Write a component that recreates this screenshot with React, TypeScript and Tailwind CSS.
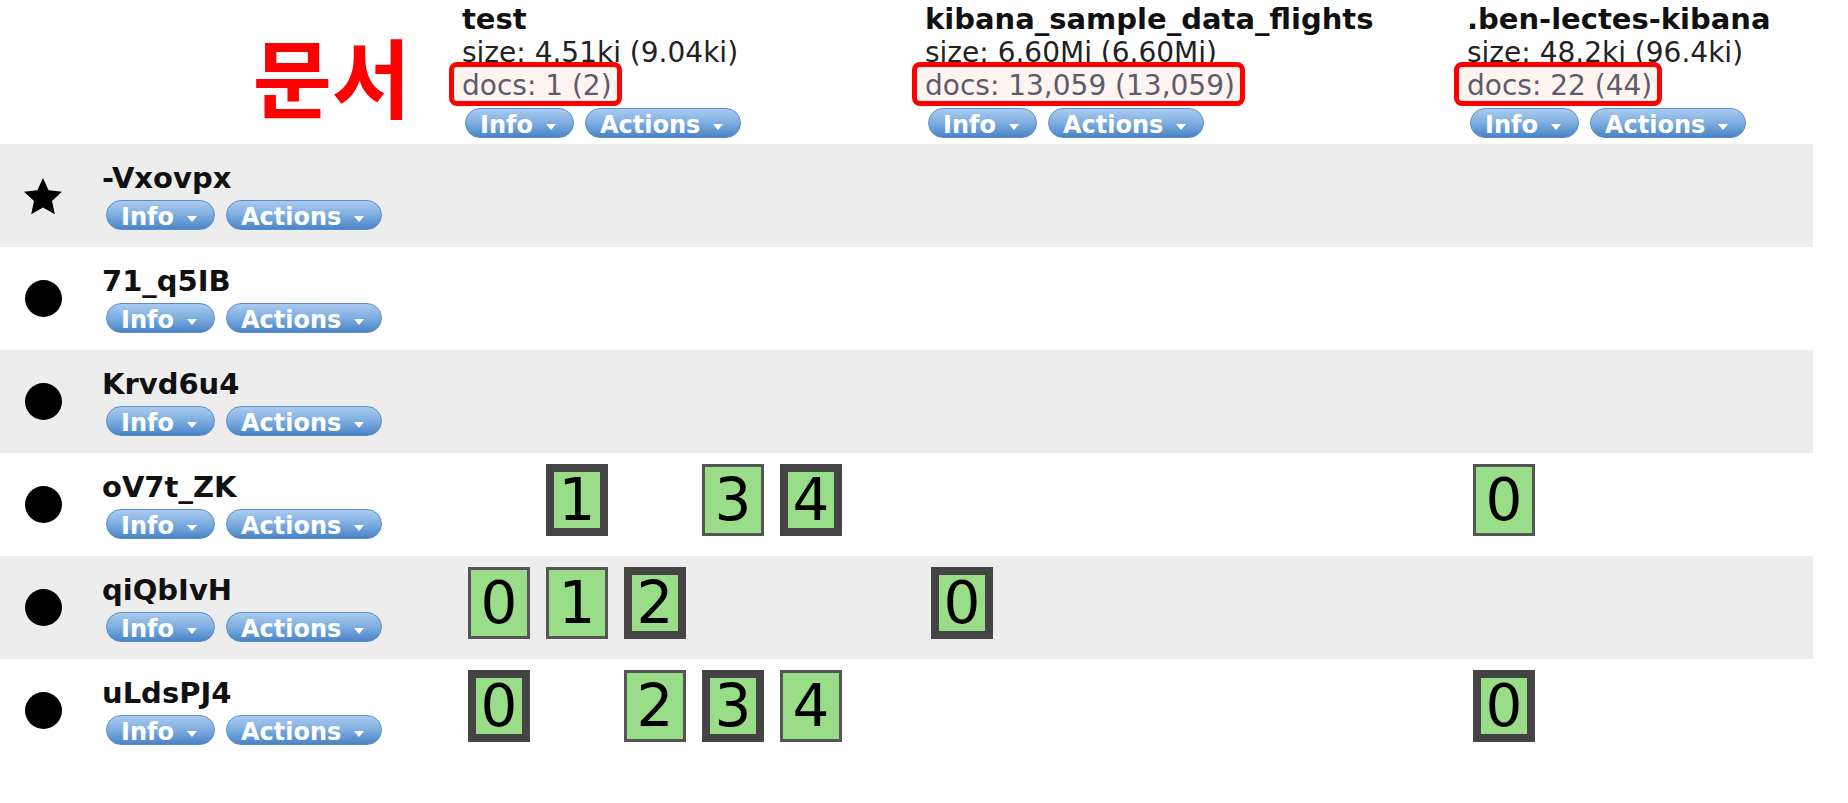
import React from 'react';

type Shard = { n: number; primary: boolean } | null;

const indices = [
  { name: 'test', size: 'size: 4.51ki (9.04ki)', docs: 'docs: 1 (2)' },
  { name: 'kibana_sample_data_flights', size: 'size: 6.60Mi (6.60Mi)', docs: 'docs: 13,059 (13,059)' },
  { name: '.ben-lectes-kibana', size: 'size: 48.2ki (96.4ki)', docs: 'docs: 22 (44)' },
];

const nodes: { name: string; master?: boolean; shards: Shard[][]; stripe: boolean }[] = [
  { name: '-Vxovpx', master: true, shards: [[], [], []], stripe: true },
  { name: '71_q5IB', shards: [[], [], []], stripe: false },
  { name: 'Krvd6u4', shards: [[], [], []], stripe: true },
  {
    name: 'oV7t_ZK',
    stripe: false,
    shards: [
      [null, { n: 1, primary: true }, null, { n: 3, primary: false }, { n: 4, primary: true }],
      [],
      [{ n: 0, primary: false }],
    ],
  },
  {
    name: 'qiQbIvH',
    stripe: true,
    shards: [
      [{ n: 0, primary: false }, { n: 1, primary: false }, { n: 2, primary: true }],
      [{ n: 0, primary: true }],
      [],
    ],
  },
  {
    name: 'uLdsPJ4',
    stripe: false,
    shards: [
      [{ n: 0, primary: true }, null, { n: 2, primary: false }, { n: 3, primary: true }, { n: 4, primary: false }],
      [],
      [{ n: 0, primary: true }],
    ],
  },
];

const font = { fontFamily: '"DejaVu Sans", Verdana, sans-serif' };

function Btn({ label }: { label: string }) {
  return (
    <span className="inline-flex h-[30px] items-start overflow-hidden rounded-full border border-[#5b8dc6] bg-gradient-to-b from-[#aacbef] via-[#7dade0] to-[#4a84c6] pl-[14px] pr-[17px] pt-[4px] text-[24px] font-bold leading-[24px] text-white">
      {label}
      <span className="ml-[13px] mt-[11px] h-0 w-0 border-l-[5px] border-r-[5px] border-t-[6px] border-l-transparent border-r-transparent border-t-white" />
    </span>
  );
}

function Buttons() {
  return (
    <div className="flex gap-[11px]">
      <Btn label="Info" />
      <Btn label="Actions" />
    </div>
  );
}

function ShardBox({ s }: { s: Shard }) {
  if (!s) return <div className="mr-[16px] w-[62px] shrink-0" />;
  return (
    <div
      className={`mr-[16px] flex h-[72px] w-[62px] shrink-0 items-center justify-center overflow-hidden bg-[#99dd88] text-[58px] leading-none text-black ${
        s.primary ? 'border-[8px] border-[#444]' : 'border-[3px] border-[#555]'
      }`}
    >
      {s.n}
    </div>
  );
}

function Star() {
  return (
    <svg width="40" height="38" viewBox="0 0 40 38">
      <polygon
        points="20,1 25.6,13.3 39,14.8 29,23.9 31.8,37.2 20,30.5 8.2,37.2 11,23.9 1,14.8 14.4,13.3"
        fill="#000"
      />
    </svg>
  );
}

export default function App() {
  return (
    <div className="min-h-screen bg-white" style={font}>
      <div className="w-[1813px]">
        {/* header */}
        <div className="grid h-[144px] grid-cols-[455px_463px_542px_353px]">
          <div className="flex justify-end pr-[44px] pt-[32px]">
            <span
              className="text-[86px] font-bold leading-none text-[#ff0000]"
              style={{ fontFamily: '"Noto Sans CJK KR", sans-serif' }}
            >
              문서
            </span>
          </div>
          {indices.map((ix) => (
            <div key={ix.name} className="pl-[7px] pt-[3px]">
              <div className="whitespace-nowrap text-[29px] font-bold leading-[33px] text-[#111]">{ix.name}</div>
              <div className="whitespace-nowrap text-[28px] leading-[33px] text-[#222]">{ix.size}</div>
              <div className="h-[33px]">
                <span className="relative isolate inline-block whitespace-nowrap text-[28px] leading-[33px] text-[#5c5c6c]">
                  <span className="absolute -bottom-[4px] -left-[13px] -right-[10px] -top-[7px] -z-10 rounded-[8px] border-[5px] border-[#ff0000] bg-[#fff4f0]" />
                  {ix.docs}
                </span>
              </div>
              <div className="ml-[3px] mt-[6px]">
                <Buttons />
              </div>
            </div>
          ))}
        </div>

        {/* node rows */}
        {nodes.map((nd) => (
          <div
            key={nd.name}
            className={`grid h-[103px] grid-cols-[455px_463px_542px_353px] ${nd.stripe ? 'bg-[#ededed]' : 'bg-white'}`}
          >
            <div className="flex">
              <div className="flex w-[86px] items-center justify-center">
                {nd.master ? <Star /> : <div className="h-[37px] w-[37px] rounded-full bg-black" />}
              </div>
              <div className="ml-[16px] pt-[18px]">
                <div className="text-[29px] font-bold leading-[33px] text-[#111]">{nd.name}</div>
                <div className="ml-[4px] mt-[5px]">
                  <Buttons />
                </div>
              </div>
            </div>
            {nd.shards.map((col, ci) => (
              <div key={ci} className="flex pl-[13px] pt-[11px]">
                {col.map((s, si) => (
                  <ShardBox key={si} s={s} />
                ))}
              </div>
            ))}
          </div>
        ))}
      </div>
    </div>
  );
}
